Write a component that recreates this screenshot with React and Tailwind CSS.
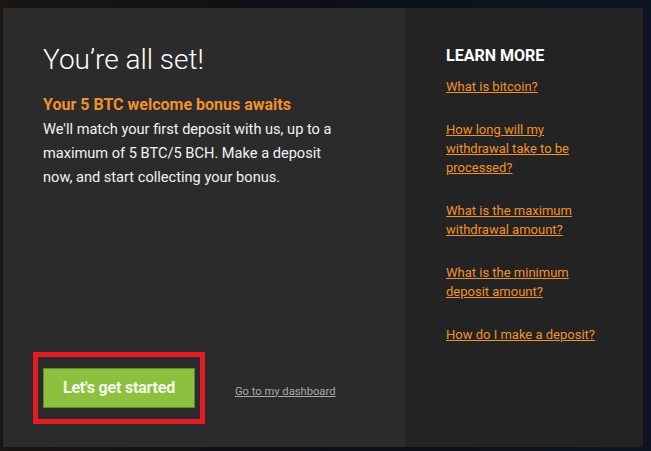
export default function App() {
  const links = [
    'What is bitcoin?',
    'How long will my withdrawal take to be processed?',
    'What is the maximum withdrawal amount?',
    'What is the minimum deposit amount?',
    'How do I make a deposit?',
  ];

  return (
    <div className="w-[651px] h-[451px] overflow-hidden bg-gradient-to-r from-[#1a1612] via-[#0c0f16] to-[#0e1522] pt-[8px] pl-[3px] font-['Roboto',sans-serif]">
      <div className="flex w-[640px] h-[439px]">
        {/* left: welcome */}
        <div className="w-[403px] shrink-0 bg-[#2b2b2b] flex flex-col pt-[34px] pl-[40px] pr-[30px] pb-[23px]">
          <h1 className="text-[28px] leading-[36px] font-light text-white">You’re all set!</h1>
          <p className="mt-[15px] text-[16px] leading-[24px] font-bold text-[#f0912c]">Your 5 BTC welcome bonus awaits</p>
          <p className="text-[14.6px] leading-[24px] text-[#f2f2f2] whitespace-nowrap">
            We'll match your first deposit with us, up to a<br />
            maximum of 5 BTC/5 BCH. Make a deposit<br />
            now, and start collecting your bonus.
          </p>

          <div className="mt-auto flex items-center -ml-[10px]">
            <div className="border-[5px] border-[#e21d26] px-[5px] py-[11px]">
              <button className="w-[152px] h-[40px] bg-[#8cc13f] border border-[#5f8a2c] text-[#f4f8ea] text-[16px] font-bold tracking-[-0.2px]">
                Let's get started
              </button>
            </div>
            <a href="#" className="ml-[30px] mt-[8px] text-[11.2px] text-[#a8a8a8] underline">Go to my dashboard</a>
          </div>
        </div>

        {/* right: learn more */}
        <div className="flex-1 bg-[#232323] pt-[38px] pl-[40px] pr-[36px]">
          <h2 className="text-[16px] leading-[20px] font-bold text-white">LEARN MORE</h2>
          <div className="mt-[11px] flex flex-col gap-[24px]">
            {links.map((l) => (
              <a key={l} href="#" className="block w-[160px] text-[13px] leading-[19px] text-[#f0912c] underline">
                {l}
              </a>
            ))}
          </div>
        </div>
      </div>
    </div>
  );
}
